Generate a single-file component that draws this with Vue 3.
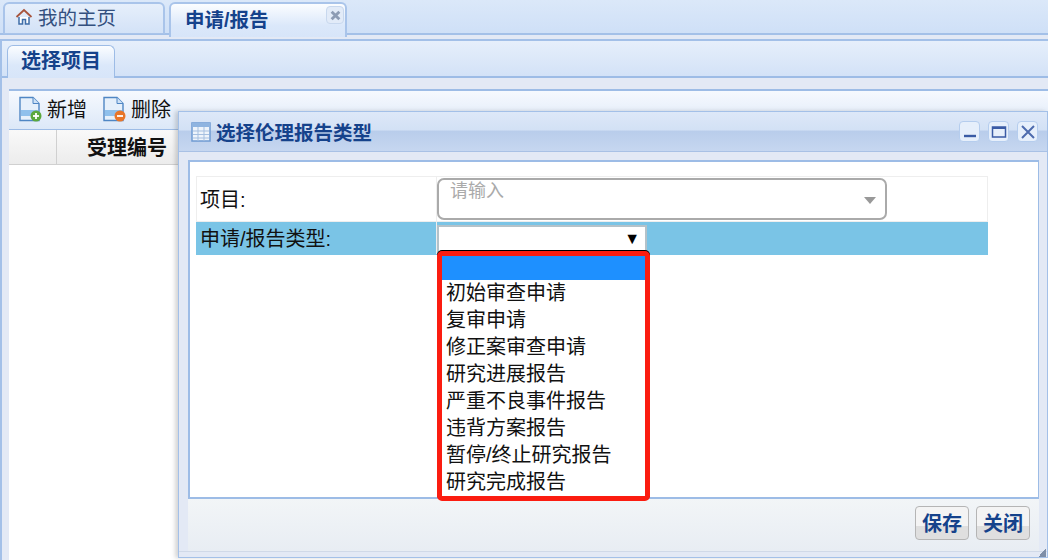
<template>
  <div class="page">
    <div class="main-tabs">
      <div class="main-tab">
        <svg class="home" viewBox="0 0 18 18" width="18" height="18">
          <path d="M1.500 9 9 2l7.500 7" fill="none" stroke="#a8543c" stroke-width="1.800" />
          <path d="M4 9v7h3.500v-4.500h3V16H14V9" fill="#fff" stroke="#3f6ea8" stroke-width="1.500" />
        </svg>
        <span>我的主页</span>
      </div>
      <div class="main-tab active">
        <span>申请/报告</span>
        <i class="tab-close">
          <svg viewBox="0 0 10 10" width="11" height="11">
            <path d="M1.500 1.500l7 7M8.500 1.500l-7 7" stroke="#8d9cb4" stroke-width="2.600" />
          </svg>
        </i>
      </div>
    </div>

    <div class="panel">
      <div class="sub-tabs">
        <div class="sub-tab">选择项目</div>
      </div>
      <div class="content">
        <div class="toolbar">
          <div class="tool" v-for="t in tools" :key="t.label">
            <svg viewBox="0 0 24 26" width="24" height="26">
              <path d="M2 1.500h13l6 6v17H2z" fill="#e6f0fb" stroke="#4f86c4" stroke-width="1.400" />
              <path d="M15 1.500v6h6" fill="#cfe2f6" stroke="#4f86c4" stroke-width="1" />
              <rect x="3" y="14" width="17" height="6" fill="#8fc0ec" />
              <circle cx="18" cy="20" r="5.500" :fill="t.color" />
              <path d="M15 20h6" stroke="#fff" stroke-width="1.800" />
              <path v-if="t.plus" d="M18 17v6" stroke="#fff" stroke-width="1.800" />
            </svg>
            <span>{{ t.label }}</span>
          </div>
        </div>
        <div class="grid-head">
          <div class="corner"></div>
          <div class="col-title">受理编号</div>
        </div>
      </div>
    </div>

    <div class="dialog">
      <div class="dialog-head">
        <svg class="grid-icon" viewBox="0 0 20 20" width="20" height="20">
          <rect x="1" y="1" width="18" height="18" fill="#eef4fb" stroke="#6f9bd2" stroke-width="1.500" />
          <rect x="1" y="1" width="18" height="4" fill="#8fb4e0" />
          <path d="M2 9h16M2 12.500h16M2 16h16M7 5v14M13 5v14" stroke="#a5bfe0" stroke-width="1" />
        </svg>
        <span class="dialog-title">选择伦理报告类型</span>
        <div class="win-btns">
          <i class="win-btn">
            <svg viewBox="0 0 16 16" width="16" height="16"><path d="M2 12h12" stroke="#3a5ba5" stroke-width="2.400" /></svg>
          </i>
          <i class="win-btn">
            <svg viewBox="0 0 16 16" width="16" height="16"><rect x="1.500" y="3" width="13" height="10" fill="none" stroke="#3a5ba5" stroke-width="1.500" /><path d="M1 4h14" stroke="#3a5ba5" stroke-width="2" /></svg>
          </i>
          <i class="win-btn">
            <svg viewBox="0 0 16 16" width="16" height="16"><path d="M2 2l12 12M14 2 2 14" stroke="#4d6bad" stroke-width="2" /></svg>
          </i>
        </div>
      </div>
      <div class="dialog-wrap">
        <div class="dialog-body">
          <table class="form">
            <tbody>
              <tr class="row-one">
                <td class="label">项目:</td>
                <td class="field">
                  <div class="combo">
                    <span>请输入</span>
                    <i class="combo-arrow"></i>
                  </div>
                </td>
              </tr>
              <tr class="row-two">
                <td class="label">申请/报告类型:</td>
                <td class="field">
                  <div class="select"><span>▼</span></div>
                </td>
              </tr>
            </tbody>
          </table>
          <ul class="options">
            <li v-for="o in options" :key="o" :class="{ picked: o === '' }">{{ o }}</li>
          </ul>
        </div>
        <div class="dialog-foot">
          <button>保存</button>
          <button>关闭</button>
        </div>
      </div>
      <div class="dialog-status"><i class="grip"></i></div>
    </div>
  </div>
</template>

<script setup>
const tools = [
  { label: "新增", color: "#5aa83c", plus: true },
  { label: "删除", color: "#e8762a", plus: false },
];

const options = [
  "",
  "初始审查申请",
  "复审申请",
  "修正案审查申请",
  "研究进展报告",
  "严重不良事件报告",
  "违背方案报告",
  "暂停/终止研究报告",
  "研究完成报告",
];
</script>

<style>
html,
body {
  margin: 0;
  background: #fff;
  overflow: hidden;
}
</style>

<style scoped>
.page {
  position: relative;
  width: 1048px;
  height: 560px;
  overflow: hidden;
  background: #e3e9f5;
  font-family: "Liberation Sans", "Noto Sans CJK SC", sans-serif;
  font-size: 20px;
  color: #111;
}

.main-tabs {
  display: flex;
  gap: 4px;
  height: 35px;
  box-sizing: border-box;
  padding: 2px 0 0 3px;
  background: linear-gradient(#dbe8f9, #cfe0f7);
  border-bottom: 2px solid #a3c0e8;
}

.main-tab {
  position: relative;
  display: flex;
  align-items: center;
  width: 162px;
  height: 32px;
  box-sizing: border-box;
  padding: 0 0 4px 10px;
  gap: 5px;
  border: 2px solid #a9c4ea;
  border-bottom-width: 1px;
  border-radius: 6px 6px 0 0;
  background: linear-gradient(#e6effb, #d3e2f7);
  color: #33507f;
  font-size: 19.500px;
}

.main-tab.active {
  width: 178px;
  height: 35px;
  padding: 0 0 5px 14px;
  border-bottom: none;
  background: linear-gradient(#fbfdff, #dbe8fa 65%, #d7e5f9);
  color: #15428b;
  font-size: 19.500px;
  font-weight: 700;
}

.tab-close {
  position: absolute;
  top: 2px;
  right: 1px;
  display: flex;
  align-items: center;
  justify-content: center;
  width: 16px;
  height: 16px;
  border: 1px solid #c8d8ee;
  border-radius: 4px;
  background: #e2ebf8;
}

.panel {
  margin: 4px 0 0;
  height: 521px;
  border-top: 2px solid #a3c0e8;
  border-left: 2px solid #a3c0e8;
  box-sizing: border-box;
}

.sub-tabs {
  height: 37px;
  box-sizing: border-box;
  padding: 4px 0 0 5px;
  background: linear-gradient(#e6effb, #d3e2f7);
  border-bottom: 2px solid #9dbce6;
}

.sub-tab {
  width: 108px;
  height: 33px;
  box-sizing: border-box;
  border: 1px solid #9dbce6;
  border-bottom: none;
  border-radius: 6px 6px 0 0;
  background: linear-gradient(#fbfdff, #dbe8fa 60%, #d7e5f9);
  color: #15428b;
  font-weight: 700;
  text-align: center;
  line-height: 31px;
}

.content {
  margin: 11px 0 0 7px;
  height: 470px;
  background: #fff;
  border-top: 2px solid #9dbce6;
}

.toolbar {
  display: flex;
  align-items: center;
  gap: 15px;
  height: 39px;
  box-sizing: border-box;
  padding: 0 0 3px 9px;
  background: linear-gradient(#f6f9fe, #dce8f8);
  border-bottom: 1px solid #9dbce6;
}

.tool {
  display: flex;
  align-items: center;
  gap: 5px;
}

.grid-head {
  display: flex;
  height: 34px;
  background: linear-gradient(#f9f9f9, #ececec);
  border-bottom: 1px solid #d0d0d0;
  font-weight: 700;
  line-height: 37px;
}

.corner {
  width: 47px;
  border-right: 1px solid #d0d0d0;
}

.col-title {
  padding-left: 30px;
}

.dialog {
  position: absolute;
  left: 178px;
  top: 111px;
  width: 870px;
  height: 447px;
  box-sizing: border-box;
  display: flex;
  flex-direction: column;
  background: #e3e9f5;
  border: 1px solid #a3c0e8;
  box-shadow: -3px 0 4px rgba(90, 90, 90, 0.25);
}

.dialog-head {
  display: flex;
  align-items: center;
  flex: none;
  height: 40px;
  box-sizing: border-box;
  padding: 0 9px 0 12px;
  gap: 5px;
  background: linear-gradient(#dde8f8, #d3e1f5 45%, #b9cdeb 50%, #c6d7f0);
  border-bottom: 1px solid #a9c1e5;
}

.dialog-title {
  color: #15428b;
  font-size: 19.500px;
  font-weight: 700;
}

.win-btns {
  display: flex;
  gap: 8px;
  margin-left: auto;
}

.win-btn {
  display: flex;
  align-items: center;
  justify-content: center;
  width: 21px;
  height: 21px;
  box-sizing: border-box;
  border: 1px solid #b5cdee;
  border-radius: 4px;
  background: #e6effb;
}

.dialog-wrap {
  flex: 1;
  margin: 8px 8px 0 9px;
  display: flex;
  flex-direction: column;
  min-height: 0;
}

.dialog-body {
  position: relative;
  height: 339px;
  flex: none;
  box-sizing: border-box;
  padding: 14px 0 0 6px;
  background: #fff;
  border: 2px solid #9dbce6;
  border-right-width: 1px;
  border-bottom: 2px solid #9dbce6;
}

.form {
  width: 792px;
  border-collapse: collapse;
  table-layout: fixed;
}

.form td {
  padding: 0;
  box-sizing: border-box;
  border: 1px solid #eee;
}

.label {
  width: 240px;
  padding: 0 0 2px 3px !important;
}

.row-one td {
  height: 45px;
}

.row-two td {
  height: 33px;
  background: #7ac4e6;
  border-color: #7ac4e6;
  border-right-color: #eee;
}

.row-two .field {
  border-right-color: #7ac4e6;
}

.combo {
  position: relative;
  width: 450px;
  height: 42px;
  box-sizing: border-box;
  padding: 2px 0 0 11px;
  border: 2px solid #aaa;
  border-radius: 7px;
  color: #aaa;
  font-size: 18px;
  line-height: 18px;
}

.combo-arrow {
  position: absolute;
  right: 9px;
  top: 17px;
  border: 6px solid transparent;
  border-top: 7px solid #999;
  border-bottom: none;
}

.select {
  width: 210px;
  height: 27px;
  margin-top: 1px;
  box-sizing: border-box;
  border: 2px solid #b4c2c9;
  border-bottom: none;
  background: #fff;
  text-align: right;
  padding-right: 5px;
  font-size: 16px;
  line-height: 24px;
  color: #000;
}

.options {
  position: absolute;
  left: 247px;
  top: 89px;
  width: 213px;
  height: 250px;
  box-sizing: border-box;
  margin: 0;
  padding: 0;
  list-style: none;
  background: #fff;
  border: 5px solid #fb1c10;
  border-radius: 5px;
  box-shadow: 0 -1px 0 #000;
}

.options li {
  height: 27px;
  padding-left: 4px;
  line-height: 27px;
  font-size: 20px;
  white-space: nowrap;
}

.options li.picked {
  height: 24px;
  background: #1e90ff;
}

.dialog-foot {
  flex: 1;
  display: flex;
  align-items: center;
  justify-content: flex-end;
  gap: 7px;
  padding: 0 9px 5px 0;
  background: linear-gradient(#f2f5f7, #e8edf3);
}

.dialog-foot button {
  width: 54px;
  height: 34px;
  padding: 0;
  border: 1px solid #b5b5b5;
  border-radius: 4px;
  background: linear-gradient(#f4f4f4 60%, #dfdfdf 60%);
  color: #15428b;
  font-family: inherit;
  font-size: 20px;
  font-weight: 700;
}

.dialog-status {
  position: relative;
  flex: none;
  height: 5px;
  background: #e3e9f5;
  border-top: 1px solid #d0d9e8;
}

.grip {
  position: absolute;
  right: 1px;
  bottom: 0;
  width: 8px;
  height: 8px;
  background: linear-gradient(135deg, transparent 50%, #7f8fa8 50%);
}
</style>
